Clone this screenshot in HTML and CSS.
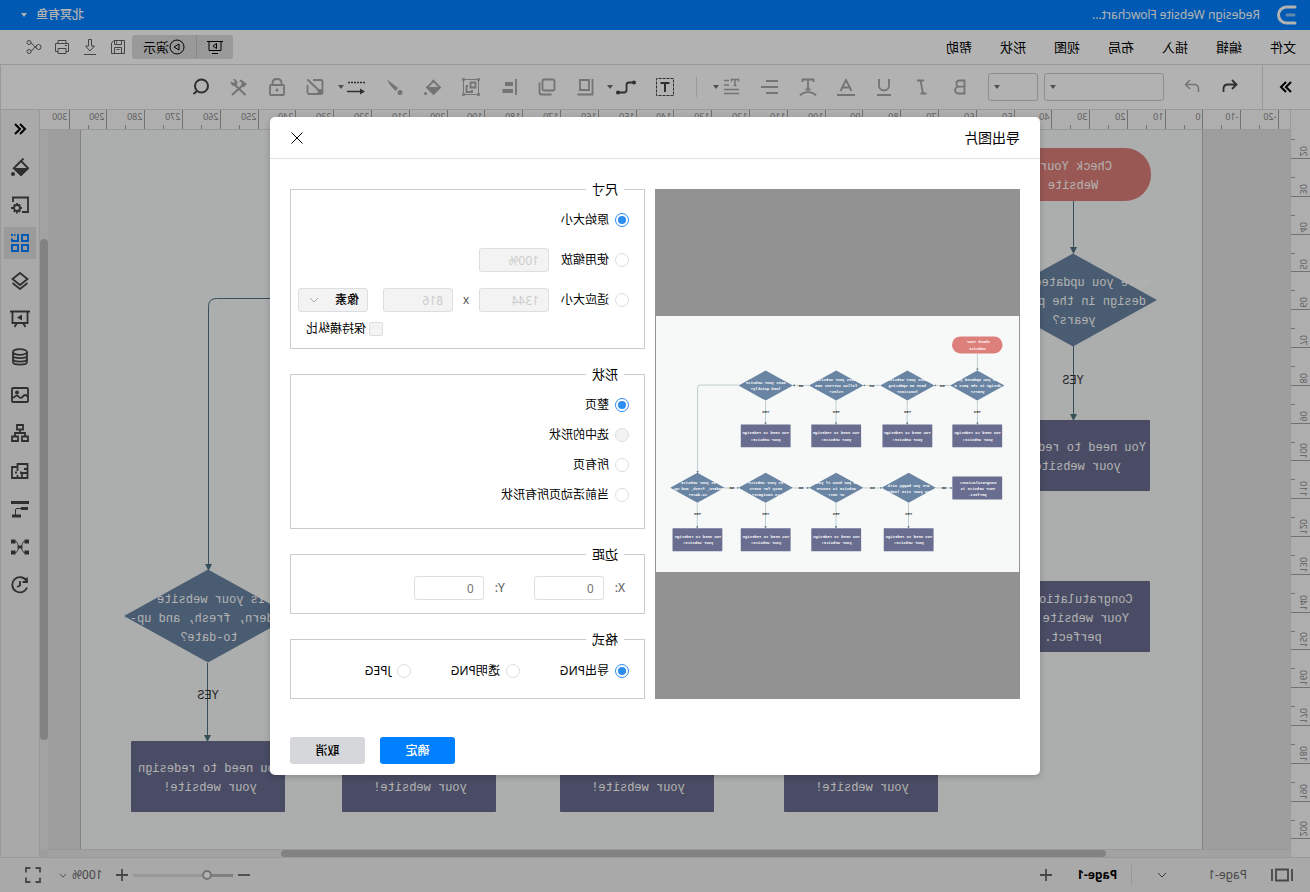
FILE: index.html
```html
<!DOCTYPE html>
<html lang="zh-CN">
<head>
<meta charset="utf-8">
<title>Redesign Website Flowchart</title>
<link rel="stylesheet" href="styles.css">
</head>
<body>
<div class="app">
  <header class="titlebar">
    <svg class="logo" width="20" height="20" viewBox="0 0 20 20" fill="none" stroke-linecap="round" stroke-width="3"><path stroke="#fff" d="M2 2h8.500a8 8 0 0 1 0 16H2"/><path stroke="#8cc4ff" d="M3 10h7"/></svg>
    <span class="doc-name">Redesign Website Flowchart...</span>
    <button class="user" type="button">北冥有鱼<i class="caret"></i></button>
  </header>

  <nav class="menubar">
    <button type="button">文件</button>
    <button type="button">编辑</button>
    <button type="button">插入</button>
    <button type="button">布局</button>
    <button type="button">视图</button>
    <button type="button">形状</button>
    <button type="button">帮助</button>
    <div class="present">
      <button type="button" aria-label="放映"><svg width="16" height="16" viewBox="0 0 16 16" class="line"><path d="M0 2.500h16M2 2.500v9h12v-9M5 14.500h6M6.500 4.500v5l3.500-2.500z"/></svg></button>
      <button type="button"><svg width="16" height="16" viewBox="0 0 16 16" class="line"><circle cx="8" cy="8" r="7"/><path d="M6 5v6l5-3z"/></svg>演示</button>
    </div>
    <div class="quick">
      <button type="button" aria-label="保存"><svg width="16" height="16" viewBox="0 0 16 16" class="line"><path d="M1.500 1.500h10.500l2.500 2.500v10.500h-13zM4.500 1.500v4h7v-4M4.500 14.500v-6h7v6M9.500 2.500v2M6.500 10.500h3"/></svg></button>
      <button type="button" aria-label="下载"><svg width="16" height="16" viewBox="0 0 16 16" class="line"><path d="M6.500.500h3v6.500h3l-4.500 5-4.500-5h3zM2 15.500h12"/></svg></button>
      <button type="button" aria-label="打印"><svg width="16" height="16" viewBox="0 0 16 16" class="line"><path d="M4 4.500v-3h8v3M4 12.500h-2.500v-8h13v8h-2.500M4 9.500h8v5h-8zM3 6.500h2"/></svg></button>
      <button type="button" aria-label="分享"><svg width="16" height="16" viewBox="0 0 16 16" class="line"><circle cx="3.500" cy="8" r="2.500"/><circle cx="13" cy="3.500" r="2"/><circle cx="13" cy="12.500" r="2"/><path d="M6 8c3 0 2.500-3.500 5-4.200M6 8c3 0 2.500 3.500 5 4.200"/></svg></button>
    </div>
  </nav>

  <div class="toolbar">
    <button class="fold" type="button" aria-label="收起"><svg width="14" height="14" viewBox="0 0 14 14" class="bold black"><path d="m2 2 5 5-5 5M7 2l5 5-5 5"/></svg></button>
    <button type="button" class="on" aria-label="撤销"><svg width="18" height="18" viewBox="0 0 18 18" class="mid"><path d="M7 2 2.500 6.500 7 11M3 6.500h8c3 0 4.500 2 4.500 4.500v3"/></svg></button>
    <button type="button" aria-label="重做"><svg width="18" height="18" viewBox="0 0 18 18" class="thin"><path d="m11 2 4.500 4.500L11 11M15 6.500H7c-3 0-4.500 2-4.500 4.500v3"/></svg></button>
    <label class="drop wide"><select aria-label="字体"><option></option></select><i class="caret"></i></label>
    <label class="drop"><select aria-label="字号"><option></option></select><i class="caret"></i></label>
    <button type="button" aria-label="加粗"><svg width="18" height="18" viewBox="0 0 18 18" class="mid"><path d="M4.500 2.500h5a3 3 0 0 1 0 6.200h-5zM4.500 8.700h6a3.300 3.300 0 0 1 0 6.800h-6z"/></svg></button>
    <button type="button" aria-label="斜体"><svg width="18" height="18" viewBox="0 0 18 18" class="mid"><path d="M7 2.500h7M4.500 15.500h6M10.500 2.500l-2.500 13"/></svg></button>
    <button type="button" aria-label="下划线"><svg width="18" height="18" viewBox="0 0 18 18" class="mid"><path d="M4 1v6.500a5 5 0 0 0 10 0v-6.500M2 17h14"/></svg></button>
    <button type="button" aria-label="字体颜色"><svg width="18" height="18" viewBox="0 0 18 18" class="mid"><path d="M3.500 13 9 2l5.500 11M5.500 9.500h7"/><path stroke-width="2" d="M0 17h18"/></svg></button>
    <button type="button" aria-label="艺术字"><svg width="18" height="18" viewBox="0 0 18 18" class="mid"><path d="M3.500 4v-2.500h11v2.500M9 1.500v9.500M6.500 11.500h5M1 17.500c4-4.500 12-4.500 16 0"/></svg></button>
    <button type="button" aria-label="对齐"><svg width="18" height="18" viewBox="0 0 18 18" class="mid"><path d="M1 3h12M1 9h17M1 15h12"/></svg></button>
    <button type="button" class="more" aria-label="行距"><svg width="18" height="18" viewBox="0 0 18 18" class="thin"><path d="M1.500 3.500v-2h7v2M5 1.500v6M3.500 7.500h3M11 2.500h5M11 7h5M1 11.500h15M1 15.500h15"/></svg><i class="caret"></i></button>
    <span class="sep"></span>
    <button type="button" class="on" aria-label="文本框"><svg width="18" height="18" viewBox="0 0 18 18" class="mid"><path stroke-width="1" stroke-dasharray="3 1" d="M.5.500h17v17H.5z"/><path stroke-width="2" d="M4.500 5h9M9 5v9"/></svg></button>
    <button type="button" class="on more" aria-label="连接线"><svg width="20" height="18" viewBox="0 0 20 18" class="mid"><path d="M2 4.500h5q2.500 0 2.500 2.500v5q0 2.500 2.500 2.500h6"/><circle cx="2" cy="4.500" r="2" fill="currentColor" stroke="none"/><circle cx="18" cy="14.500" r="2" fill="currentColor" stroke="none"/></svg><i class="caret"></i></button>
    <button type="button" aria-label="置底"><svg width="18" height="18" viewBox="0 0 18 18" class="mid"><path d="M5 2h9v10H5zM1.500 1v15.500h15"/></svg></button>
    <button type="button" aria-label="层叠"><svg width="18" height="18" viewBox="0 0 18 18" class="mid"><rect x="1.500" y="1.500" width="12" height="11" rx="1.500"/><path d="M16.500 4.500v10q0 2-2 2H4.500"/></svg></button>
    <button type="button" aria-label="左对齐"><svg width="18" height="18" viewBox="0 0 18 18" class="mid"><path d="M2 1v16"/><path stroke-width="4" d="M5 6h8M5 13h10.500"/></svg></button>
    <button type="button" aria-label="组合"><svg width="18" height="18" viewBox="0 0 18 18" class="mid"><path stroke-width="1" d="M1.500 1.500h15v15h-15zM.5.500h2v2h-2zM15.500.500h2v2h-2zM.5 15.500h2v2h-2zM15.500 15.500h2v2h-2z"/><path d="M4.500 4.500h5v5h-5zM12 8h1.500v6H8v-2"/></svg></button>
    <button type="button" aria-label="填充"><svg width="18" height="18" viewBox="0 0 18 18" class="mid"><path d="M8.500 3 15 9.500 8.500 16 2 9.500 9.500 2"/><path fill="currentColor" d="M3 10h11l-5.500 5.500z"/><circle cx="16.500" cy="15.500" r="1.500" fill="currentColor" stroke="none"/></svg></button>
    <button type="button" aria-label="画笔"><svg width="18" height="18" viewBox="0 0 18 18"><path fill="currentColor" d="M17.500 1 6 10l2.500 3Q14 8 17.500 1z"/><circle cx="4" cy="14.500" r="2.500" fill="currentColor"/></svg></button>
    <button type="button" class="on more" aria-label="线型"><svg width="18" height="18" viewBox="0 0 18 18" class="thin"><path stroke-dasharray="2 1" d="M0 4.500h18"/><path d="M3 13.500h15"/><path fill="currentColor" stroke="none" d="M5 10.500v6L0 13.500z"/></svg><i class="caret"></i></button>
    <button type="button" aria-label="编辑"><svg width="18" height="18" viewBox="0 0 18 18" class="mid"><path d="M11 2H3q-1.500 0-1.500 1.500v11Q1.500 16 3 16h12q1.500 0 1.500-1.500V7"/><path stroke-width="2" d="M16.500 1.500 5 12.500"/><circle cx="4" cy="13.500" r="2.500" fill="currentColor" stroke="none"/></svg></button>
    <button type="button" aria-label="锁定"><svg width="18" height="18" viewBox="0 0 18 18" class="mid"><rect x="2" y="7" width="14" height="10" rx="1"/><path d="M4.500 7V5q0-4 4.500-4t4.500 4v2"/><circle cx="9" cy="12" r="1.500" fill="currentColor" stroke="none"/></svg></button>
    <button type="button" aria-label="工具"><svg width="18" height="18" viewBox="0 0 18 18" class="bold"><path d="m5 7 11 10M13 7 2.500 17"/><path fill="currentColor" stroke="none" d="M1 6 7 1.500 9 3 6 5l1 2-2.500 2.500zM11 6.500l-.5-3L13 1l2 .2-2 2.300 1.500 1.500L17 3.500l.5 2L15 8l-3-.5z"/></svg></button>
    <button type="button" class="on" aria-label="查找"><svg width="18" height="18" viewBox="0 0 18 18" class="bold"><circle cx="8.500" cy="8" r="6.500"/><path d="m13 13 3.500 3"/></svg></button>
  </div>

  <main class="workspace">
    <div class="canvas-area">
      <div class="corner"></div>
      <svg class="ruler ruler-x" id="ruler-x"></svg>
      <svg class="ruler ruler-y" id="ruler-y"></svg>
      <div class="viewport">
        <div class="page">
          <svg class="chart" viewBox="108 130 1122 719" preserveAspectRatio="xMinYMin slice">
            <defs>
              <marker id="arrow" viewBox="0 0 7 7" refX="6" refY="3.500" markerWidth="7" markerHeight="7" orient="auto"><path d="M0 0 7 3.500 0 7z" fill="#50717f"/></marker>
              <path id="dia" d="M0-46.500 84 0 0 46.500-84 0z" fill="#6a84a3"/>
              <rect id="box" x="-77" y="-35" width="154" height="71" rx="1" fill="#696d90"/>
            </defs>
            <g id="flowchart">
              <g class="links">
                <path d="M236.500 201v52"/><path d="M236.500 346v74"/><path d="M453.500 346v74"/><path d="M673.500 346v74"/><path d="M891.500 346v74"/>
                <path d="M449.500 663v78"/><path d="M673.500 663v78"/><path d="M891.500 663v78"/><path d="M1102.500 663v78"/>
                <path d="M321 299.500h48"/><path d="M537 299.500h52"/><path d="M757 299.500h50"/>
                <path d="M975 298.500h118.500q8 0 8 8V570"/>
                <path d="M1018 616.500h-43"/><path d="M807 616.500h-50"/><path d="M589 616.500h-56"/><path d="M365 616.500h-51"/>
              </g>
              <rect x="159" y="148" width="156" height="53" rx="26" fill="#dd7f7a"/>
              <use href="#dia" x="237" y="300"/><use href="#dia" x="453" y="300"/><use href="#dia" x="673" y="300"/><use href="#dia" x="891" y="300"/>
              <use href="#dia" x="449" y="616"/><use href="#dia" x="673" y="616"/><use href="#dia" x="891" y="616"/><use href="#dia" x="1102" y="616"/>
              <use href="#box" x="237" y="455"/><use href="#box" x="453" y="455"/><use href="#box" x="673" y="455"/><use href="#box" x="891" y="455"/>
              <use href="#box" x="237" y="616"/>
              <use href="#box" x="449" y="776"/><use href="#box" x="673" y="776"/><use href="#box" x="891" y="776"/><use href="#box" x="1102" y="776"/>
              <g class="node-text">
                <text y="170"><tspan x="234">Check Your</tspan><tspan x="237" dy="19">Website</tspan></text>
                <text y="286"><tspan x="236">Have you updated your</tspan><tspan x="236" dy="19">design in the past 2</tspan><tspan x="236" dy="19">years?</tspan></text>
                <text y="286"><tspan x="453">Does your website</tspan><tspan x="453" dy="19">have an updating</tspan><tspan x="453" dy="19">function?</tspan></text>
                <text y="286"><tspan x="673">Does your website</tspan><tspan x="673" dy="19">follow current SEO</tspan><tspan x="673" dy="19">rules?</tspan></text>
                <text y="296"><tspan x="891">Does your website</tspan><tspan x="891" dy="19">load quickly?</tspan></text>
                <text y="603"><tspan x="235">Congratulations!</tspan><tspan x="235" dy="19">Your website is</tspan><tspan x="237" dy="19">perfect.</tspan></text>
                <text y="613"><tspan x="449">Are you happy with</tspan><tspan x="449" dy="19">how your site looks?</tspan></text>
                <text y="603"><tspan x="673">Do you know if your</tspan><tspan x="673" dy="19">website is secure</tspan><tspan x="673" dy="19">or not?</tspan></text>
                <text y="603"><tspan x="891">Is your website</tspan><tspan x="891" dy="19">easy for users</tspan><tspan x="891" dy="19">to navigate?</tspan></text>
                <text y="603"><tspan x="1099">Is your website</tspan><tspan x="1101" dy="19">modern, fresh, and up-</tspan><tspan x="1101" dy="19">to-date?</tspan></text>
                <text y="451"><tspan x="236">You need to redesign</tspan><tspan x="236" dy="19">your website!</tspan></text>
                <text y="451"><tspan x="453">You need to redesign</tspan><tspan x="453" dy="19">your website!</tspan></text>
                <text y="451"><tspan x="673">You need to redesign</tspan><tspan x="673" dy="19">your website!</tspan></text>
                <text y="451"><tspan x="891">You need to redesign</tspan><tspan x="891" dy="19">your website!</tspan></text>
                <text y="772"><tspan x="448">You need to redesign</tspan><tspan x="448" dy="19">your website!</tspan></text>
                <text y="772"><tspan x="672">You need to redesign</tspan><tspan x="672" dy="19">your website!</tspan></text>
                <text y="772"><tspan x="890">You need to redesign</tspan><tspan x="890" dy="19">your website!</tspan></text>
                <text y="772"><tspan x="1100">You need to redesign</tspan><tspan x="1100" dy="19">your website!</tspan></text>
              </g>
              <g class="link-text">
                <text x="237" y="384">YES</text><text x="453" y="384">YES</text><text x="673" y="384">YES</text><text x="891" y="384">YES</text>
                <text x="449" y="699">YES</text><text x="673" y="699">YES</text><text x="891" y="699">YES</text><text x="1102" y="699">YES</text>
                <text x="345" y="303">NO</text><text x="563" y="303">NO</text><text x="782" y="303">NO</text>
                <text x="340" y="620">NO</text><text x="561" y="620">NO</text><text x="782" y="620">NO</text><text x="996" y="620">NO</text>
              </g>
            </g>
          </svg>
        </div>
        <div class="bar-y"><i></i></div>
        <div class="bar-x"><i></i></div>
      </div>
    </div>
    <aside class="sidebar">
      <button type="button" aria-label="展开"><svg width="14" height="14" viewBox="0 0 14 14" class="bold black"><path d="M7 2 2 7l5 5M12 2 7 7l5 5"/></svg></button>
      <button type="button" aria-label="填充"><svg width="18" height="18" viewBox="0 0 18 18" class="mid"><path d="M8 3 15 10 8 17 1 10 8 3 5.500.500"/><path fill="currentColor" d="M1.500 11h13L8 17z"/><circle cx="16" cy="16" r="2" fill="currentColor" stroke="none"/></svg></button>
      <button type="button" aria-label="页面设置"><svg width="18" height="18" viewBox="0 0 18 18" class="mid"><path d="M16 6V1.500H1V16h6"/><circle cx="12" cy="12" r="3"/><path d="M12 7v2M12 15v2.500M7 12h2M15 12h3M9 8.500l1 1.500M15 8.500 14 10M9 16l1-2M15 16l-1-2"/></svg></button>
      <button type="button" class="active" aria-label="符号库"><svg width="18" height="18" viewBox="0 0 18 18" class="bold"><path d="M1 1h6v6H1zM1 11h6v6H1zM11 11h6v6h-6z"/><path d="M11 0v7h6V4.500M13.500 1H15M17 0v2"/></svg></button>
      <button type="button" aria-label="图层"><svg width="18" height="18" viewBox="0 0 18 18" class="mid"><path d="m9 1 7.500 6L9 13 1.500 7zM1.500 11 9 17l7.500-6"/></svg></button>
      <button type="button" aria-label="演示"><svg width="20" height="18" viewBox="0 0 20 18" class="mid"><path d="M0 1.500h20M2.500 1.500v11.500h15v-11.500M7 13l-2.500 4M13 13l2.500 4"/><path fill="currentColor" stroke="none" d="M8 4.500v6l5-3z"/></svg></button>
      <button type="button" aria-label="数据"><svg width="18" height="18" viewBox="0 0 18 18" class="mid"><ellipse cx="9" cy="4" rx="7" ry="2.800"/><path d="M2 4v10c0 3.500 14 3.500 14 0V4M2 7.500c0 3.500 14 3.500 14 0M2 11c0 3.500 14 3.500 14 0"/></svg></button>
      <button type="button" aria-label="图片"><svg width="18" height="18" viewBox="0 0 18 18" class="mid"><rect x="1" y="2" width="16" height="14" rx="1"/><path d="M1 11q3-4 5.500 0 2 2 4-.5 2-2 4 .5l2.500 1"/><circle cx="12" cy="6.500" r="2" fill="currentColor" stroke="none"/></svg></button>
      <button type="button" aria-label="组织结构"><svg width="18" height="18" viewBox="0 0 18 18" class="mid"><path d="M6 1h6v4.500H6zM1 12.500h6V17H1zM11 12.500h6V17h-6zM9 5.500V9M4 12V9h10v3"/></svg></button>
      <button type="button" aria-label="平面图"><svg width="18" height="18" viewBox="0 0 18 18" class="mid"><path d="M1.500 2h10v3H17v11H1.500zM1.500 7H5M1.500 11H7v5M11.500 5v4M11.500 13v3M8 9.500V12M12 10.500h2"/></svg></button>
      <button type="button" aria-label="时间线"><svg width="18" height="18" viewBox="0 0 18 18" class="mid"><path stroke-width="3" d="M0 2.500h18M1 8.500h7M8 16h9"/><path stroke-width="1" d="M8 8.500h4q1.500 0 1.500 1.500v6"/></svg></button>
      <button type="button" aria-label="思维导图"><svg width="18" height="18" viewBox="0 0 18 18" class="mid"><path stroke-width="1" d="M4 3.500c4 0 2 5.500 5 5.500s1-5.500 5-5.500M4 14.500c4 0 2-5.500 5-5.500s1 5.500 5 5.500"/><path stroke-width="4" d="M0 3.500h4.500M13.500 3.500H18M0 14.500h4.500M13.500 14.500H18"/><path stroke-width="3" d="M6.500 9h5"/></svg></button>
      <button type="button" aria-label="历史"><svg width="18" height="18" viewBox="0 0 18 18" class="mid"><path d="M2.500 5A7.600 7.600 0 1 1 2 11.500M9 5v4.500l3 1.500M2 1.500V6h4.500"/></svg></button>
    </aside>
  </main>

  <footer class="statusbar">
    <svg width="22" height="14" viewBox="0 0 22 14" class="mid"><path d="M5 1.500h12v11H5zM1 1v12M21 1v12"/></svg>
    <span class="page-label">Page-1</span>
    <svg class="chev" width="10" height="6" viewBox="0 0 10 6"><path d="m1 1 4 4 4-4"/></svg>
    <span class="sep"></span>
    <a class="page-tab" href="#">Page-1</a>
    <button type="button" aria-label="添加页"><svg width="12" height="12" viewBox="0 0 12 12" class="mid"><path d="M6 0v12M0 6h12"/></svg></button>
    <span class="spacer"></span>
    <button type="button" aria-label="缩小"><svg width="12" height="12" viewBox="0 0 12 12" class="mid"><path d="M0 6h12"/></svg></button>
    <input class="zoom" type="range" value="23" aria-label="缩放">
    <button type="button" aria-label="放大"><svg width="12" height="12" viewBox="0 0 12 12" class="mid"><path d="M6 0v12M0 6h12"/></svg></button>
    <button type="button" class="percent">100%<svg class="chev" width="8" height="5" viewBox="0 0 10 6"><path d="m1 1 4 4 4-4"/></svg></button>
    <button type="button" aria-label="全屏"><svg width="16" height="16" viewBox="0 0 16 16" class="mid"><path d="M1 5.500V1h4.500M10.500 1H15v4.500M15 10.500V15h-4.500M5.500 15H1v-4.500"/></svg></button>
  </footer>

  <div class="mask">
    <form class="modal" role="dialog" aria-labelledby="modal-title">
      <div class="modal-head">
        <span id="modal-title">导出图片</span>
        <button type="button" aria-label="关闭"><svg width="12" height="12" viewBox="0 0 12 12" class="line"><path d="m.5.500 11 11M11.500.500l-11 11"/></svg></button>
      </div>
      <div class="modal-body">
        <div class="preview"><svg viewBox="108 85 1122 789"><use href="#flowchart"/></svg></div>
        <div class="options">
          <fieldset class="size">
            <legend>尺寸</legend>
            <div class="row"><label><input type="radio" name="size" checked>原始大小</label></div>
            <div class="row"><label><input type="radio" name="size">使用缩放</label><input type="text" value="100%" aria-label="缩放比例" disabled></div>
            <div class="row"><label><input type="radio" name="size">适应大小</label><input type="text" value="1344" aria-label="宽度" disabled><span class="times">x</span><input type="text" value="816" aria-label="高度" disabled>
              <span class="unit"><select aria-label="单位" disabled><option>像素</option></select><svg class="chev" width="10" height="6" viewBox="0 0 10 6"><path d="m1 1 4 4 4-4"/></svg></span></div>
            <label class="ratio"><input type="checkbox" disabled>保持横纵比</label>
          </fieldset>
          <fieldset class="shapes">
            <legend>形状</legend>
            <label><input type="radio" name="shape" checked>整页</label>
            <label><input type="radio" name="shape" disabled>选中的形状</label>
            <label><input type="radio" name="shape">所有页</label>
            <label><input type="radio" name="shape">当前活动页所有形状</label>
          </fieldset>
          <fieldset class="margins">
            <legend>边距</legend>
            <div class="pair">
              <label>X:<input type="text" value="0"></label>
              <label>Y:<input type="text" value="0"></label>
            </div>
          </fieldset>
          <fieldset class="format">
            <legend>格式</legend>
            <div class="kinds">
              <label><input type="radio" name="format" checked>导出PNG</label>
              <label><input type="radio" name="format">透明PNG</label>
              <label><input type="radio" name="format">JPEG</label>
            </div>
          </fieldset>
        </div>
      </div>
      <div class="modal-foot">
        <button type="button" class="primary">确定</button>
        <button type="button">取消</button>
      </div>
    </form>
  </div>
</div>
<script src="rulers.js"></script>
</body>
</html>
```

FILE: styles.css
```css
* { box-sizing: border-box; }

body {
  margin: 0;
  font: 12px/20px "Noto Sans", "Noto Sans CJK SC", sans-serif;
  color: #000;
}

button {
  display: flex;
  align-items: center;
  justify-content: center;
  padding: 0;
  border: 0;
  background: none;
  font: inherit;
  color: inherit;
}

svg { display: block; flex: none; }
.line, .thin, .mid, .bold, .chev { fill: none; stroke: currentColor; }
.thin { stroke-width: 1.5; }
.mid { stroke-width: 1.8; }
.bold { stroke-width: 2; }
.black { color: #000; }
.chev { stroke-width: 2; }

.caret {
  border: 3px solid transparent;
  border-top: 4px solid currentColor;
  border-bottom: 0;
}

/* The whole interface is shown mirrored. */
.app {
  position: relative;
  display: flex;
  flex-direction: column;
  height: 100vh;
  overflow: hidden;
  transform: scaleX(-1);
}

.titlebar {
  display: flex;
  align-items: center;
  height: 30px;
  padding: 0 21px 0 13px;
  background: #0080ff;
  color: #fff;
}
.doc-name { margin-left: 17px; }
.user { margin-left: auto; gap: 9px; font-weight: 500; }

.menubar {
  display: flex;
  align-items: center;
  height: 35px;
  padding: 0 26px 0 14px;
  gap: 28px;
  border-bottom: 1px solid #dcdcdc;
  font-size: 13px;
}
.present { display: flex; margin-left: auto; }
.present button { width: 36px; height: 24px; background: #dcdcdc; border-radius: 3px 0 0 3px; }
.present button + button { width: 65px; border-left: 1px solid #c4c4c4; border-radius: 0 3px 3px 0; }
.quick { display: flex; gap: 12px; margin-left: -22px; color: #606060; }

.toolbar {
  display: flex;
  align-items: center;
  height: 45px;
  border: 1px solid #dcdcdc;
  border-width: 0 1px 1px 0;
  color: #a6a6a6;
}
.toolbar button { width: 38px; height: 44px; }
.toolbar .on { color: #444; }
.toolbar .fold { width: 48px; margin-right: 13px; border-right: 1px solid #dcdcdc; }
.toolbar .more { width: 42px; gap: 3px; }
.toolbar .more .caret { margin-right: -6px; color: #707070; }
.drop { position: relative; width: 50px; margin-right: 9px; }
.drop.wide { width: 120px; margin: 0 6px 0 9px; }
.drop select { width: 100%; height: 28px; appearance: none; border: 1px solid #ccc; border-radius: 3px; background: #fff; }
.drop .caret { position: absolute; right: 6px; top: 12px; color: #707070; }
.sep { width: 1px; height: 20px; background: #dcdcdc; }
.toolbar .sep { margin: 0 12px; }

.workspace { display: flex; flex: 1; min-height: 0; background: #f3f3f3; }
.canvas-area {
  display: grid;
  flex: 1;
  min-width: 0;
  grid-template: 20px 1fr / 20px 1fr;
}
.corner { border-right: 1px solid #dcdcdc; background: #fafafa; }
.ruler { width: 100%; height: 100%; background: #fafafa; font-size: 9px; fill: #8a8a8a; }
.ruler-x { border-bottom: 1px solid #dcdcdc; }
.ruler-y { border-right: 1px solid #dcdcdc; }
.ruler path { stroke: #a4a4a4; fill: none; }
.viewport {
  display: grid;
  grid-template: 1fr 8px / 1fr 8px;
  min-width: 0;
  min-height: 0;
  background: #e2e2e2;
}
.page {
  min-height: 0;
  margin: 0 32px 0 87px;
  overflow: hidden;
  border: 1px solid #bbb;
  border-width: 0 1px;
  background: #f5f9f7;
}
.chart { width: 1122px; height: 719px; }
.bar-y, .bar-x { background: #e9e9e9; border: 1px solid #dadada; }
.bar-y i, .bar-x i { display: block; border-radius: 4px; background: #bbb; }
.bar-y { padding-top: 109px; border-width: 0; }
.bar-y i { height: 501px; }
.bar-x { padding-left: 184px; border-width: 1px 0 0; }
.bar-x i { width: 825px; height: 7px; }

.links path { fill: none; stroke: #50717f; stroke-width: 1; marker-end: url(#arrow); }
.node-text, .link-text { font-family: "Liberation Mono", monospace; font-size: 12px; text-anchor: middle; }
.node-text { fill: #fff; }
.link-text { fill: #333; }

.sidebar {
  display: flex;
  flex-direction: column;
  align-items: center;
  gap: 6px;
  width: 40px;
  padding-top: 3px;
  border: 1px solid #dcdcdc;
  border-width: 0 1px;
  color: #444;
}
.sidebar button { width: 32px; height: 32px; }
.sidebar .active { background: #dfdfdf; color: #0080ff; }

.statusbar {
  display: flex;
  align-items: center;
  height: 35px;
  padding: 0 25px 0 17px;
  border-top: 1px solid #dcdcdc;
  background: #f3f3f3;
  color: #666;
}
.statusbar .chev { stroke-width: 1; color: #555; }
.page-label { margin: 0 41px 0 24px; }
.statusbar .sep { margin: 0 14px 0 25px; }
.page-tab { margin-right: 25px; color: #000; font-weight: bold; text-decoration: none; }
.spacer { flex: 1; }
.zoom { width: 100px; height: 10px; margin: 0 5px; appearance: none; background: linear-gradient(90deg, #b7b7b7 26%, #dcdcdc 26%) center / 100% 3px no-repeat; }
.zoom::-webkit-slider-thumb { width: 10px; height: 10px; appearance: none; border: 2px solid #a6a6a6; border-radius: 50%; background: #fff; }
.percent { gap: 5px; margin: 0 18px 0 13px; }

.mask {
  position: absolute;
  inset: 0;
  display: grid;
  place-items: center;
  background: rgba(0, 0, 0, 0.3);
}
.modal {
  width: 770px;
  border-radius: 5px;
  background: #fff;
  box-shadow: 0 2px 6px rgba(0, 0, 0, 0.2);
}
.modal-head {
  display: flex;
  align-items: center;
  justify-content: space-between;
  height: 42px;
  padding: 0 21px 0 20px;
  border-bottom: 1px solid #e0e1e4;
  font-size: 14px;
}
.modal-body { display: flex; gap: 10px; padding: 20px 20px 0; }
.preview {
  display: grid;
  align-items: center;
  flex: 1;
  margin-top: 10px;
  padding: 0 1px;
  background: #929292;
}
.preview svg { width: 100%; background: #f6f9f8; font-weight: bold; }
.options { display: flex; flex-direction: column; gap: 15px; width: 355px; }

fieldset { min-width: 0; margin: 0; padding: 0 7px 0 15px; border: 1px solid #ccc; }
legend { margin-left: 5px; padding: 0 6px; font-size: 13px; }
fieldset label { display: flex; align-items: center; gap: 6px; }
.row { display: flex; align-items: center; height: 40px; }
.size { padding-top: 1px; padding-bottom: 10px; }
.size .row label { width: 80px; }
.ratio { width: 85px; height: 18px; margin-left: auto; }
fieldset .ratio { gap: 3px; }
.times { width: 26px; text-align: center; color: #555; }
.unit { position: relative; margin-left: auto; color: #aaa; }
.unit .chev { position: absolute; right: 11px; top: 9px; stroke-width: 1; }
.shapes { padding-top: 6px; padding-bottom: 18px; }
.shapes label { height: 30px; }
.pair { display: flex; gap: 29px; padding: 12px 4px 13px; }
.pair label { gap: 11px; color: #555; }
.kinds { display: flex; gap: 40px; padding-bottom: 5px; }
.kinds label { height: 44px; }

input[type="radio"], input[type="checkbox"] {
  flex: none;
  width: 14px;
  height: 14px;
  margin: 0;
  appearance: none;
  border: 1px solid #dcdee2;
  border-radius: 50%;
  background: #fff;
}
input[type="checkbox"] { border-radius: 2px; }
input[type="radio"]:disabled, input[type="checkbox"]:disabled { background: #f3f3f3; }
input[type="radio"]:checked {
  position: relative;
  border-color: #2d8cf0;
}
input[type="radio"]:checked::before {
  content: "";
  position: absolute;
  inset: 2px;
  border-radius: 50%;
  background: #2d8cf0;
}
input[type="text"], .unit select {
  width: 70px;
  height: 24px;
  padding: 1px 9px 0;
  border: 1px solid #dcdee2;
  border-radius: 3px;
  background: #fff;
  color: #777;
  font: inherit;
}
input[type="text"]:disabled, .unit select:disabled { background: #f3f3f3; color: #ccc; opacity: 1; }
.unit select { display: block; appearance: none; padding: 0 8px; }
.unit select:disabled { color: #000; font-weight: 500; }

.modal-foot { display: flex; justify-content: flex-end; gap: 15px; padding: 38px 20px 11px; }
.modal-foot button { width: 75px; height: 27px; border-radius: 3px; background: #d5d7da; font-weight: 500; }
.modal-foot .primary { background: #0080ff; color: #fff; }
```

FILE: rulers.js
```js
// Draws both rulers: 10 units are 37.795px, as for millimetres at 96dpi.
const UNIT = 3.7795;

function ruler(svg, from, to, origin, vertical) {
  let ticks = "";
  let labels = "";
  for (let v = from; v <= to; v += 5) {
    const p = Math.floor(origin + v * UNIT) + 0.5;
    const start = v % 10 === 0 ? 0 : 15;
    ticks += vertical ? `M${start} ${p}H20` : `M${p} ${start}V20`;
    if (v % 10 === 0) {
      labels += vertical
        ? `<text transform="translate(10 ${p - 2}) rotate(-90)">${v}</text>`
        : `<text x="${p + 2}" y="10">${v}</text>`;
    }
  }
  svg.innerHTML = `<path d="${ticks}"/>${labels}`;
}

ruler(document.getElementById("ruler-x"), -20, 300, 87, false);
ruler(document.getElementById("ruler-y"), 15, 200, -47, true);
```
